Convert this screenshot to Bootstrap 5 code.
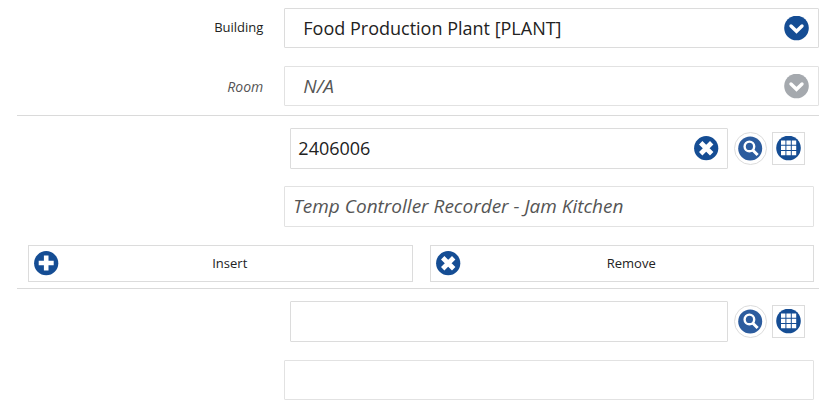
<!DOCTYPE html>
<html lang="en">
<head>
<meta charset="utf-8">
<meta name="viewport" content="width=device-width, initial-scale=1">
<title>Work order assets</title>
<link href="https://cdn.jsdelivr.net/npm/bootstrap@5.3.0/dist/css/bootstrap.min.css" rel="stylesheet">
<style>
body { font-family: "Open Sans", "Noto Sans", sans-serif; font-size: 13px; color: #222; background: #fff; }
.page { padding: 8px 15px 8px 17px; }
.field-label { padding-right: 21px; }
.box { border: 1px solid #dcdcdc; border-radius: 1px; background: #fff; color: #222; font-size: 18px; height: 40px; width: 100%; padding: 0 8px 2px; display: block; }
.box-tall { height: 41px; }
.box-select { appearance: none; padding: 0 48px 0 18px; opacity: 1; }
.box-quiet { border-color: #e2e2e2; color: #555; font-size: 19px; font-style: italic; opacity: 1; }
.box-entry { padding: 0 40px 2px 7px; }
.muted-label { color: #555; font-size: 14px; font-style: italic; }
.in-icon { top: 8px; right: 10px; }
.entry-icon { top: 8px; right: 9px; }
.disc { width: 25px; height: 25px; display: block; flex: none; }
.navy { color: #154d94; }
.ash { color: #a5a9ae; }
.rule { border-top: 1px solid #dadada; margin-bottom: 12px; }
.rule-first { margin-top: 9px; }
.rule-second { margin-top: 6px; }
.inset { padding-right: 5px; }
.entry-row { padding: 0 14px 0 6px; }
.tool { width: 33px; height: 33px; border: 1px solid #dcdcdc; background: #fff; padding: 0; display: flex; align-items: center; justify-content: center; flex: none; }
.tools { padding-left: 6px; gap: 5px; }
.actions { padding: 0 5px 0 11px; gap: 17px; }
.wide { flex: 1 1 0; height: 37px; border: 1px solid #dcdcdc; background: #fff; color: #222; padding: 0 5px; display: flex; align-items: center; }
.wide span { flex: 1; padding-right: 6px; }
.gap-below { margin-bottom: 18px; }
.entry-gap { margin-bottom: 17px; }
</style>
<script src="https://cdn.jsdelivr.net/npm/bootstrap@5.3.0/dist/js/bootstrap.bundle.min.js"></script>
</head>
<body>
<svg class="d-none" aria-hidden="true">
  <symbol id="chevron" viewBox="0 0 25 25"><circle cx="12.5" cy="12" r="12.3" fill="currentColor"/><path d="M7 10l5.5 5.3L18 10" fill="none" stroke="#fff" stroke-width="3.4" stroke-linecap="round"/></symbol>
  <symbol id="cross" viewBox="0 0 25 25"><circle cx="12.2" cy="12.2" r="12.1" fill="currentColor"/><path d="M6.7 6.7l11 11M17.7 6.7l-11 11" stroke="#fff" stroke-width="4.8"/></symbol>
  <symbol id="plus" viewBox="0 0 25 25"><circle cx="12.2" cy="12.2" r="12.1" fill="currentColor"/><path d="M12.2 4.5v15M4.7 12h15" stroke="#fff" stroke-width="4.6"/></symbol>
  <symbol id="search" viewBox="0 0 25 25"><circle cx="12.2" cy="12.5" r="12" fill="#2c5c9e"/><circle cx="11.4" cy="10.4" r="4.8" fill="none" stroke="#fff" stroke-width="2.4"/><path d="M14.6 14l5 5" stroke="#fff" stroke-width="3"/></symbol>
  <symbol id="tiles" viewBox="0 0 25 25"><circle cx="12.5" cy="12" r="12.3" fill="currentColor"/><path d="M5 4.5h4.4v4.2H5zM10.4 4.5h4.4v4.2h-4.4zM15.8 4.5h4.4v4.2h-4.4zM5 9.8h4.4v4.2H5zM10.4 9.8h4.4v4.2h-4.4zM15.8 9.8h4.4v4.2h-4.4zM5 15.1h4.4v4.2H5zM10.4 15.1h4.4v4.2h-4.4zM15.8 15.1h4.4v4.2h-4.4z" fill="#fff"/></symbol>
</svg>
<form class="page">
  <div class="row g-0 align-items-center gap-below">
    <label class="col-4 text-end field-label" for="building">Building</label>
    <div class="col-8 position-relative">
      <select class="box box-select" id="building"><option>Food Production Plant [PLANT]</option></select>
      <svg class="disc navy position-absolute in-icon pe-none" aria-hidden="true"><use href="#chevron"/></svg>
    </div>
  </div>
  <div class="row g-0 align-items-center">
    <label class="col-4 text-end field-label muted-label" for="room">Room</label>
    <div class="col-8 position-relative">
      <select class="box box-select box-quiet" id="room" disabled><option>N/A</option></select>
      <svg class="disc ash position-absolute in-icon pe-none" aria-hidden="true"><use href="#chevron"/></svg>
    </div>
  </div>
  <div class="rule rule-first"></div>
  <div class="row g-0 justify-content-end entry-gap">
    <div class="col-8 d-flex align-items-center entry-row">
      <div class="position-relative flex-grow-1">
        <input class="box box-tall box-entry" type="text" value="2406006" aria-label="Asset number">
        <button class="btn p-0 border-0 navy position-absolute entry-icon" type="button" aria-label="Clear"><svg class="disc" aria-hidden="true"><use href="#cross"/></svg></button>
      </div>
      <div class="d-flex tools">
        <button class="tool rounded-circle" type="button" aria-label="Search"><svg class="disc"><use href="#search"/></svg></button>
        <button class="tool navy" type="button" aria-label="Browse"><svg class="disc"><use href="#tiles"/></svg></button>
      </div>
    </div>
  </div>
  <div class="row g-0 justify-content-end gap-below">
    <div class="col-8 inset"><input class="box box-tall box-quiet" type="text" value="Temp Controller Recorder - Jam Kitchen" readonly aria-label="Asset description"></div>
  </div>
  <div class="d-flex actions">
    <button class="wide" type="button"><svg class="disc navy" aria-hidden="true"><use href="#plus"/></svg><span>Insert</span></button>
    <button class="wide" type="button"><svg class="disc navy" aria-hidden="true"><use href="#cross"/></svg><span>Remove</span></button>
  </div>
  <div class="rule rule-second"></div>
  <div class="row g-0 justify-content-end gap-below">
    <div class="col-8 d-flex align-items-center entry-row">
      <input class="box box-tall box-entry flex-grow-1" type="text" aria-label="New asset number">
      <div class="d-flex tools">
        <button class="tool rounded-circle" type="button" aria-label="Search"><svg class="disc"><use href="#search"/></svg></button>
        <button class="tool navy" type="button" aria-label="Browse"><svg class="disc"><use href="#tiles"/></svg></button>
      </div>
    </div>
  </div>
  <div class="row g-0 justify-content-end">
    <div class="col-8 inset"><input class="box box-quiet" type="text" readonly aria-label="New asset description"></div>
  </div>
</form>
</body>
</html>
